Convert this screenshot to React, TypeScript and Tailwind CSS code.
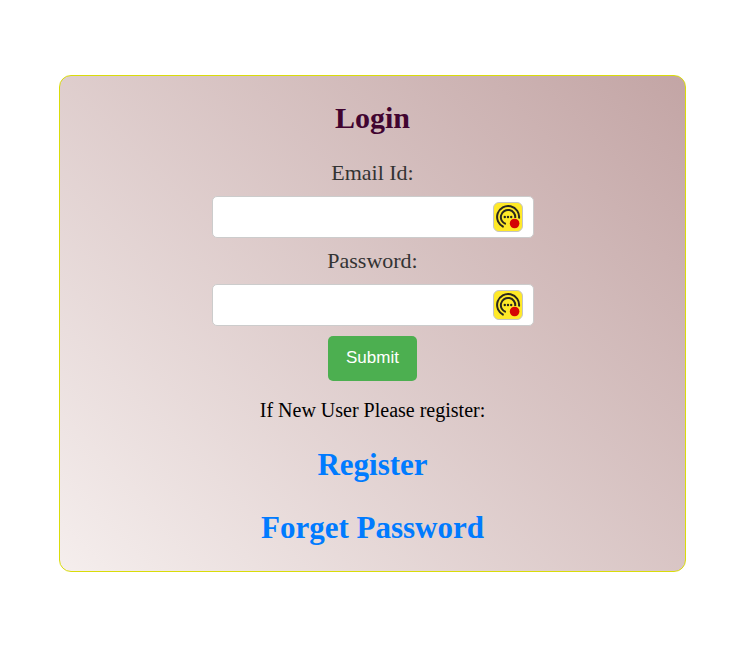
import React from "react";

function FieldBadge({ label }: { label: string }) {
  return (
    <button type="button" aria-label={label} className="absolute right-[11px] top-[6px] h-[30px] w-[30px]">
      <svg viewBox="0 0 30 30" className="h-full w-full" fill="none">
        <rect x="0.5" y="0.5" width="29" height="29" rx="5.5" fill="#ffe928" stroke="#c4c4c4" />
        <path d="M10.6 25A11 11 0 1 1 26 16.5" stroke="#29271f" strokeWidth="2" />
        <path d="M12.8 22A7.2 7.2 0 1 1 22.2 16" stroke="#29271f" strokeWidth="2" />
        <circle cx="11.8" cy="15" r="1.2" fill="#29271f" />
        <circle cx="15" cy="15" r="1.2" fill="#29271f" />
        <circle cx="18.2" cy="15" r="1.2" fill="#29271f" />
        <circle cx="21.6" cy="21.5" r="4.8" fill="#d40505" />
      </svg>
    </button>
  );
}

function Field({ id, label, type }: { id: string; label: string; type: string }) {
  return (
    <div className="flex w-full flex-col items-center">
      <label htmlFor={id} className="mb-[10px] text-[22px] leading-[26px] text-[#333333]">
        {label}
      </label>
      <div className="relative mb-[10px] w-full max-w-[322px]">
        <input
          id={id}
          type={type}
          className="block h-[42px] w-full rounded-[5px] border border-[#cccccc] bg-white pl-[10px] pr-[45px] text-base outline-none"
        />
        <FieldBadge label={`Fill ${label}`} />
      </div>
    </div>
  );
}

export default function App() {
  return (
    <main className="min-h-screen bg-white pb-16 pl-[59px] pr-[65px] pt-[75px] font-['Liberation_Serif','Times_New_Roman',serif]">
      <section className="flex flex-col items-center rounded-[12px] border border-[#d9dc0a] bg-[linear-gradient(45deg,#f5eeed,#c3a5a5)] px-5 pb-[25px] pt-[24px] text-center">
        <h2 className="mb-[24px] text-[30px] font-bold leading-[36px] text-[#410430]">Login</h2>
        <form className="flex w-full flex-col items-center" onSubmit={(e) => e.preventDefault()}>
          <Field id="email" label="Email Id:" type="email" />
          <Field id="password" label="Password:" type="password" />
          <button
            type="submit"
            className="h-[45px] rounded-[5px] bg-[#4caf50] px-[18px] pb-[2px] font-['Liberation_Sans',Arial,sans-serif] text-[17px] leading-[20px] text-white"
          >
            Submit
          </button>
        </form>
        <p className="mt-[17px] text-[20px] leading-[24px] text-black">If New User Please register:</p>
        <h2 className="mt-[25px] text-[31px] font-bold leading-[36px]">
          <a href="#register" className="text-[#007bff]">Register</a>
        </h2>
        <h2 className="mt-[27px] text-[31px] font-bold leading-[36px]">
          <a href="#forget" className="text-[#007bff]">Forget Password</a>
        </h2>
      </section>
    </main>
  );
}
